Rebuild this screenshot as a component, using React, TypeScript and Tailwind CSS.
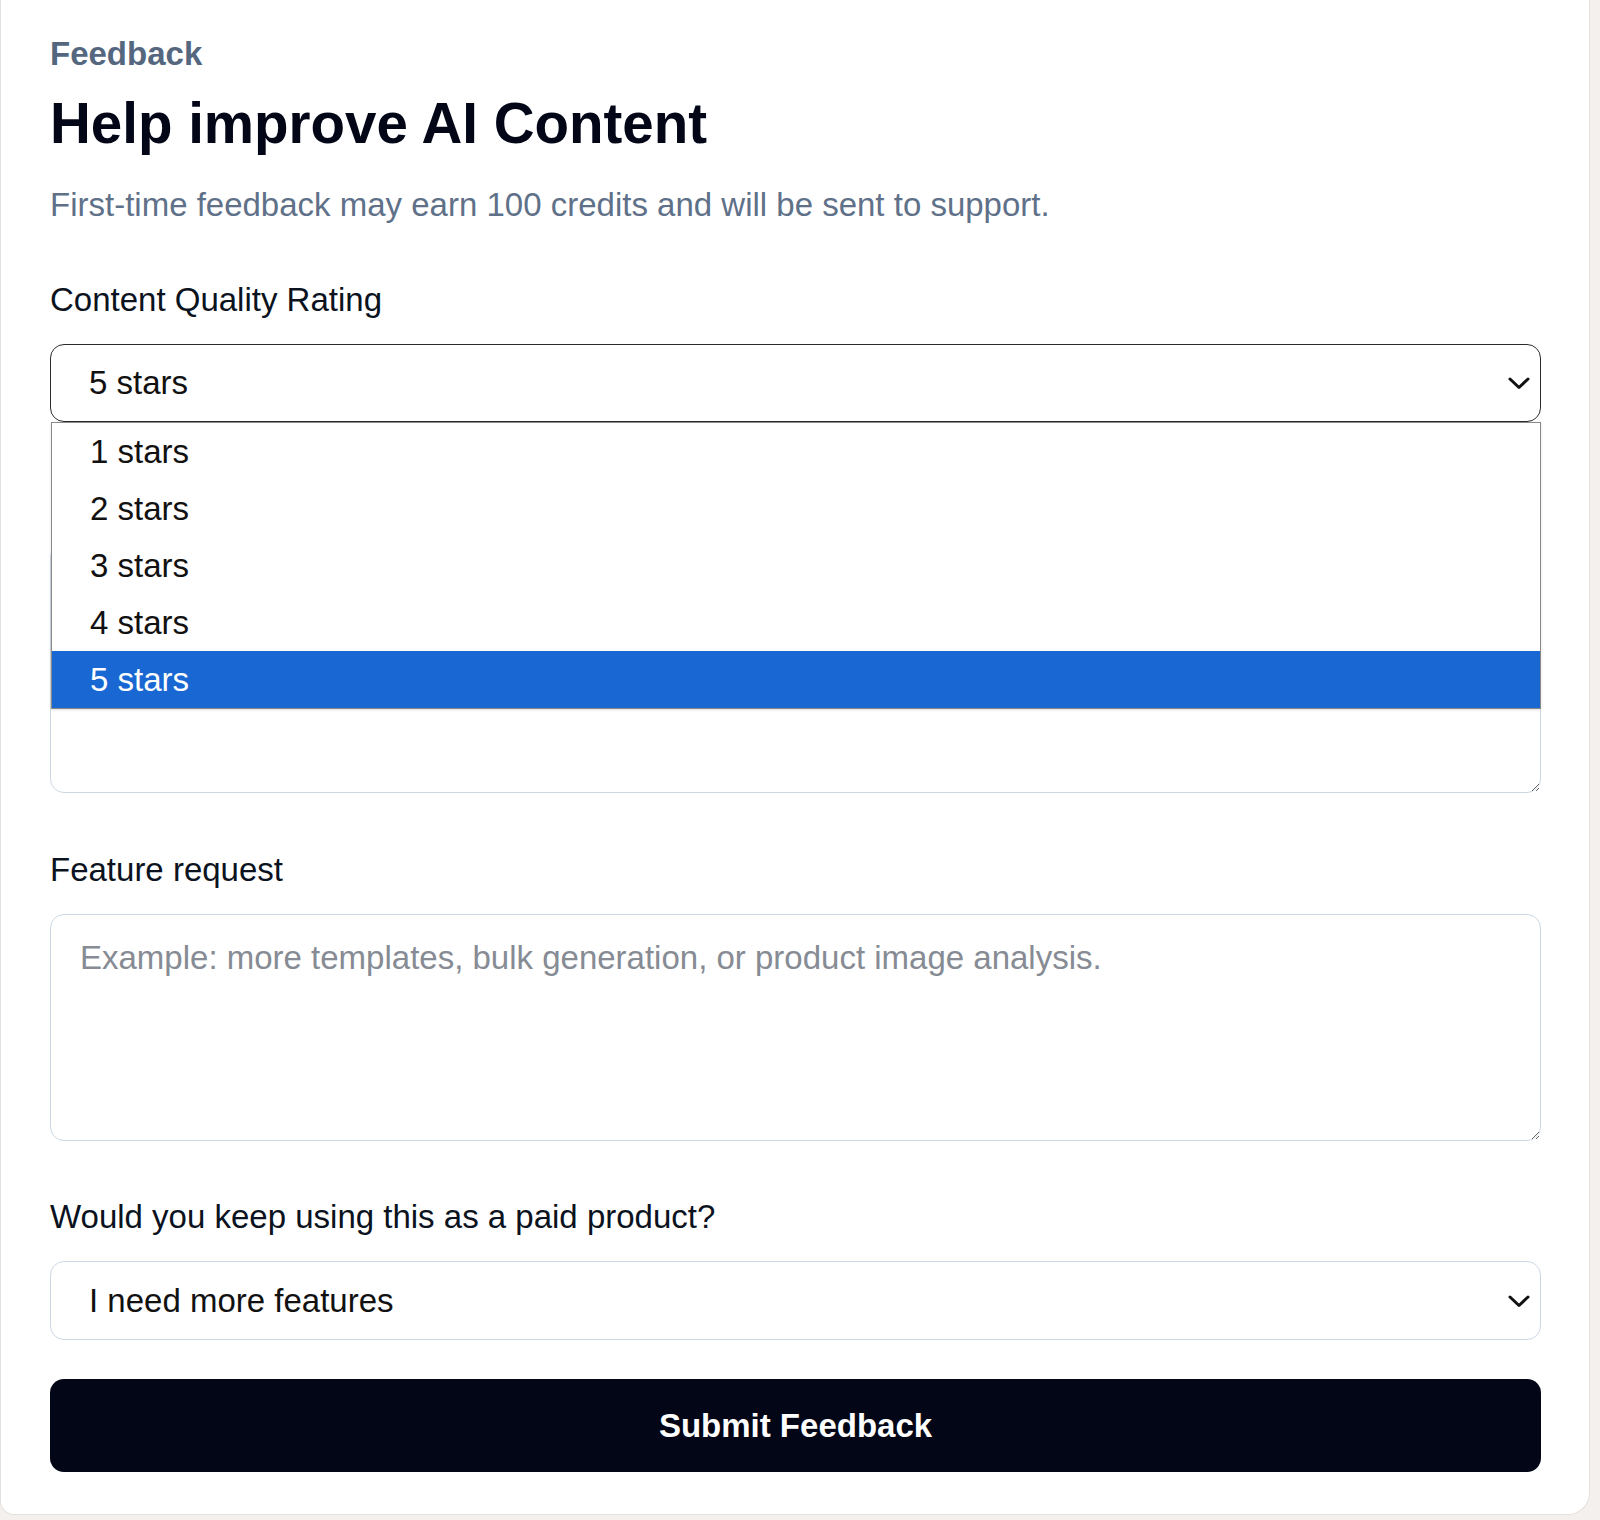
import { useState } from 'react';

const ratings = ['1 stars', '2 stars', '3 stars', '4 stars', '5 stars'];

function Chevron() {
  return (
    <svg
      width="24"
      height="14"
      viewBox="0 0 24 14"
      fill="none"
      className="pointer-events-none absolute right-[9px] top-1/2 -translate-y-1/2"
    >
      <path d="M3 3l9 8.5 9-8.5" stroke="#111" strokeWidth="3" strokeLinecap="round" strokeLinejoin="round" />
    </svg>
  );
}

export default function App() {
  const [rating] = useState('5 stars');

  return (
    <div className="w-[1600px] h-[1520px] bg-[#f3f0ee] font-['Liberation_Sans',Arial,sans-serif] overflow-hidden">
      <div className="w-[1590px] bg-white border border-t-0 border-[#e4e0dd] rounded-bl-[14px] rounded-br-[22px] pl-[49px] pr-[48px] pt-[34px] pb-[42px]">
        {/* Header */}
        <div className="text-[33px] leading-[40px] font-bold text-[#55677f]">Feedback</div>
        <h1 className="mt-[16px] text-[56.5px] leading-[68px] font-bold text-[#020617]">
          Help improve AI Content
        </h1>
        <p className="mt-[27px] text-[33px] leading-[40px] text-[#5f7189]">
          First-time feedback may earn 100 credits and will be sent to support.
        </p>

        {/* Rating */}
        <label className="block mt-[55px] text-[33px] leading-[40px] text-[#0b1220]">
          Content Quality Rating
        </label>
        <div className="relative mt-[24px]">
          <div className="relative h-[78px] rounded-[14px] border border-[#2b2b2b] bg-white pl-[38px] flex items-center text-[33px] text-[#111]">
            {rating}
            <Chevron />
          </div>

          {/* Open option list */}
          <div className="absolute z-10 left-[1px] right-0 top-[78px] bg-white border border-[#8a8a8a] shadow-sm">
            {ratings.map((r) => (
              <div
                key={r}
                className={
                  r === rating
                    ? 'h-[57px] flex items-center pl-[38px] text-[33px] bg-[#1967d2] text-white'
                    : 'h-[57px] flex items-center pl-[38px] text-[33px] text-[#111]'
                }
              >
                {r}
              </div>
            ))}
          </div>
        </div>

        {/* Comments field, covered by the open list */}
        <div className="mt-[57px] h-[40px]" />
        <textarea className="block mt-[24px] w-full h-[250px] rounded-[14px] border border-[#cdd7e3] px-[29px] pt-[22px] text-[33px] leading-[40px] outline-none" />

        {/* Feature request */}
        <label className="block mt-[57px] text-[33px] leading-[40px] text-[#0b1220]">Feature request</label>
        <textarea
          className="block mt-[24px] w-full h-[227px] rounded-[14px] border border-[#cdd7e3] px-[29px] pt-[23px] text-[33px] leading-[40px] placeholder:text-[#868b94] outline-none"
          placeholder="Example: more templates, bulk generation, or product image analysis."
        />

        {/* Paid product */}
        <label className="block mt-[56px] text-[33px] leading-[40px] text-[#0b1220]">
          Would you keep using this as a paid product?
        </label>
        <div className="relative mt-[24px] h-[79px] rounded-[14px] border border-[#cdd7e3] bg-white pl-[38px] flex items-center text-[33px] text-[#111]">
          I need more features
          <Chevron />
        </div>

        <button className="mt-[39px] w-full h-[93px] rounded-[14px] bg-[#020617] text-white text-[33px] font-bold">
          Submit Feedback
        </button>
      </div>
    </div>
  );
}
